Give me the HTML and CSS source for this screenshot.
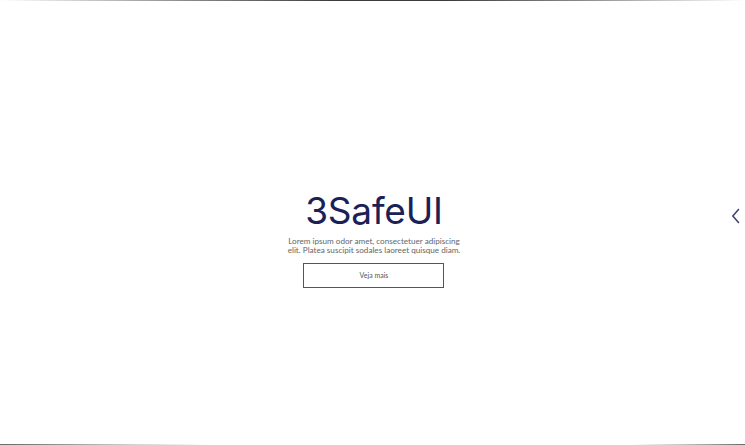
FILE: index.html
```html
<!DOCTYPE html>
<html lang="pt">
<head>
<meta charset="utf-8">
<title>3SafeUI</title>
<link rel="stylesheet" href="styles.css">
</head>
<body>
<div class="page">
  <div class="line-top"></div>
  <section class="hero">
    <div class="hero-content">
      <h1 class="title">3SafeUI</h1>
      <p class="lead">Lorem ipsum odor amet, consectetuer adipiscing<br>elit. Platea suscipit sodales laoreet quisque diam.</p>
      <a class="btn" href="#">Veja mais</a>
    </div>
    <button class="arrow" aria-label="Anterior">
      <svg width="10" height="16" viewBox="0 0 10 16"><path d="M7.5 1.5 L1.8 8 L7.5 14.5" fill="none" stroke="#3d4470" stroke-width="1.6" stroke-linecap="round" stroke-linejoin="round"/></svg>
    </button>
  </section>
  <div class="line-bottom"></div>
</div>
</body>
</html>
```
FILE: styles.css
```css
html, body {
  margin: 0;
  padding: 0;
  background: #ffffff;
}
.page {
  width: 745px;
  height: 445px;
  display: flex;
  flex-direction: column;
  overflow: hidden;
}
.line-top {
  height: 1px;
  flex: none;
  background: linear-gradient(to right, rgba(60,60,60,0) 0%, rgba(60,60,60,0.6) 25%, #3c3c3c 45%, #3c3c3c 60%, rgba(60,60,60,0.6) 78%, rgba(60,60,60,0) 100%);
}
.line-bottom {
  height: 1px;
  flex: none;
  background: linear-gradient(to right, #6a6a6a 0%, #808080 5%, rgba(128,128,128,0.35) 18%, rgba(128,128,128,0) 28%, rgba(128,128,128,0) 85%, rgba(128,128,128,0.5) 92%, #6a6a6a 100%);
}
.hero {
  flex: 1;
  position: relative;
  display: flex;
  justify-content: center;
  align-items: center;
  padding-top: 33px;
}
.hero-content {
  display: flex;
  flex-direction: column;
  align-items: center;
  padding-left: 3px;
}
.title {
  margin: 0;
  font-family: "Inter", "Liberation Sans", sans-serif;
  font-weight: 400;
  font-size: 37px;
  line-height: 40px;
  color: #1b2157;
  letter-spacing: -0.2px;
}
.lead {
  margin: 6px 0 0;
  font-family: "Lato", "Liberation Sans", sans-serif;
  font-size: 8.15px;
  line-height: 9px;
  color: #666;
  text-align: center;
}
.btn {
  margin-top: 8px;
  width: 139px;
  height: 23px;
  border: 1px solid #555;
  display: flex;
  align-items: center;
  justify-content: center;
  font-family: "Lato", "Liberation Sans", sans-serif;
  font-size: 7px;
  color: #555;
  text-decoration: none;
}
.arrow {
  position: absolute;
  right: 4px;
  top: 207px;
  background: none;
  border: 0;
  padding: 0;
  width: 10px;
  height: 16px;
  cursor: pointer;
}
.arrow svg { display: block; }
```
